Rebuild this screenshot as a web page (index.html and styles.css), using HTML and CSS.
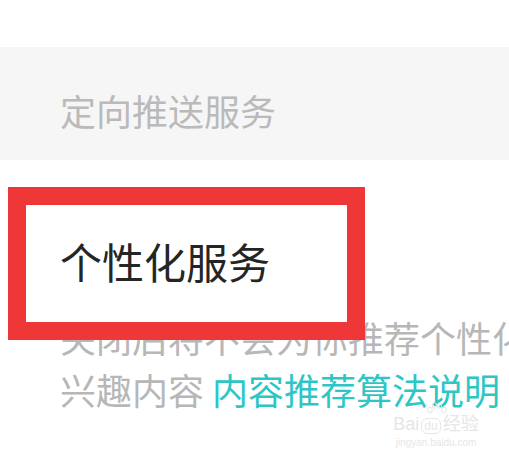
FILE: index.html
```html
<!DOCTYPE html>
<html lang="zh-CN">
<head>
    <meta charset="UTF-8">
    <title>个性化服务</title>
    <link rel="stylesheet" href="styles.css">
</head>
<body>
<div class="page">
    <div class="top-space"></div>
    <div class="section-head">定向推送服务</div>
    <div class="item">
        <div class="item-title">个性化服务</div>
        <p class="item-desc">关闭后将不会为你推荐个性化<br>兴趣内容 <a href="#" class="link">内容推荐算法说明</a></p>
    </div>
    <!-- 标注框 -->
    <div class="mark"></div>
    <div class="watermark">
        <svg class="wm-paw" width="22" height="14" viewBox="0 0 22 14">
            <g fill="none" stroke="#e4e4e4" stroke-width="1">
                <ellipse cx="4" cy="8" rx="2.2" ry="2.8"/>
                <ellipse cx="8.5" cy="3.5" rx="2.2" ry="2.8"/>
                <ellipse cx="13.5" cy="3.5" rx="2.2" ry="2.8"/>
                <ellipse cx="18" cy="8" rx="2.2" ry="2.8"/>
            </g>
        </svg>
        <span class="wm-logo">Bai<b>du</b>经验</span>
        <span class="wm-url">jingyan.baidu.com</span>
    </div>
</div>
</body>
</html>
```

FILE: styles.css
```css
* {
    margin: 0;
    padding: 0;
}

html, body {
    width: 509px;
    height: 462px;
    overflow: hidden;
    background: #fff;
}

body {
    font-family: "Noto Sans CJK SC", "Noto Sans", sans-serif;
}

.page {
    position: relative;
    height: 462px;
}

.top-space {
    height: 47px;
}

.section-head {
    height: 113px;
    box-sizing: border-box;
    padding: 45px 0 0 60px;
    background: #f6f6f6;
    color: #bababa;
    font-size: 36px;
    line-height: 36px;
}

.item {
    padding: 80px 0 0 60px;
}

.item-title {
    color: #252525;
    font-size: 42px;
    line-height: 42px;
}

.item-desc {
    margin-top: 29px;
    color: #b7b7b7;
    font-size: 36px;
    line-height: 52px;
    white-space: nowrap;
}

.link {
    color: #2dc6c6;
    text-decoration: none;
}

.mark {
    position: absolute;
    left: 8px;
    top: 187px;
    width: 321px;
    height: 117px;
    border: 18px solid #ef3737;
}

.watermark {
    position: absolute;
    left: 388px;
    top: 402px;
    width: 96px;
    text-align: center;
    color: #e6e6e6;
}

.wm-paw {
    position: absolute;
    left: 38px;
    top: 0;
}

.wm-logo {
    display: block;
    margin-top: 12px;
    font-family: "Liberation Sans", "Noto Sans CJK SC", sans-serif;
    font-size: 18px;
    line-height: 20px;
}

.wm-logo b {
    display: inline-block;
    margin: 0 2px;
    padding: 0 2px;
    border: 1px solid #e6e6e6;
    border-radius: 6px;
    font-weight: normal;
    font-size: 12px;
    line-height: 14px;
}

.wm-url {
    display: block;
    margin-top: 3px;
    font-family: "Liberation Sans", sans-serif;
    font-size: 10px;
    line-height: 12px;
}
```
